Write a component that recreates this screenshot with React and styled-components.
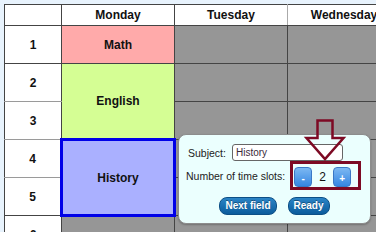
import React from "react";
import styled, { createGlobalStyle } from "styled-components";

const Global = createGlobalStyle`
  html, body { margin: 0; padding: 0; background: #e8f3fd; overflow: hidden; }
  body { font-family: "Liberation Sans", Arial, sans-serif; color: #111; }
`;

const Page = styled.div`
  position: relative;
  width: 376px;
  height: 232px;
  padding: 4px 0 0 4px;
  box-sizing: border-box;
  overflow: hidden;
`;

const Table = styled.table`
  border-collapse: collapse;
  table-layout: fixed;
  width: 396px;
  border: 1px solid #444;
`;

const Cell = styled.td`
  border: 1px solid #444;
  padding: 0;
  text-align: center;
  vertical-align: middle;
  font-weight: bold;
  font-size: 12px;
  height: 37px;
  color: #111;
`;

const HeadCell = styled(Cell).attrs({ as: "th" })`
  height: 20px;
  background: #fff;
  ${(p) => (p.$lightRight ? "border-right-color: #aaa;" : "")}
`;

const NumCell = styled(Cell)`
  background: #fff;
  border-bottom-color: ${(p) => (p.$light ? "#9a9a9a" : "#444")};
`;

const SubjectCell = styled(Cell)`
  background: ${(p) => p.$bg};
  ${(p) => (p.$selected ? "border: 3px solid #0000e8;" : "")}
`;

const GreyCell = styled(Cell)`
  background: #969696;
`;

const Popup = styled.div`
  position: absolute;
  left: 178px;
  top: 134px;
  width: 193px;
  height: 90px;
  box-sizing: border-box;
  background: #ebfffe;
  border: 1px solid #8c8c8c;
  border-radius: 8px;
  box-shadow: 0 1px 2px rgba(0, 0, 0, 0.25);
  padding-top: 9px;
  display: flex;
  flex-direction: column;
  font-size: 10.5px;
  color: #222;
`;

const Row = styled.div`
  display: flex;
  align-items: center;
  padding-left: ${(p) => p.$indent}px;
  gap: ${(p) => p.$gap}px;
`;

const Label = styled.span`
  white-space: nowrap;
`;

const Input = styled.div`
  width: 111px;
  height: 17px;
  box-sizing: border-box;
  border: 1px solid #666;
  border-radius: 3px;
  background: #fff;
  padding-left: 3px;
  font-size: 10px;
  line-height: 15px;
  color: #3a2a3a;
`;

const Highlight = styled.div`
  display: flex;
  align-items: flex-end;
  border: 3px solid #7d0a24;
  padding: 3px 7px 0 1px;
`;

const StepButton = styled.div`
  width: 18px;
  height: 20px;
  box-sizing: border-box;
  border: 1px solid #3a78c6;
  border-radius: 4px;
  background: linear-gradient(#7cb8f2, #3586e2);
  color: #fff;
  font-weight: bold;
  font-size: 10px;
  display: flex;
  align-items: center;
  justify-content: center;
  padding-top: 3px;
`;

const Count = styled.span`
  width: 21px;
  text-align: center;
  font-size: 12px;
  align-self: center;
  color: #111;
`;

const Actions = styled.div`
  display: flex;
  justify-content: center;
  gap: 11px;
  margin-top: 7px;
`;

const ActionButton = styled.div`
  height: 18px;
  box-sizing: border-box;
  padding: 0 5px;
  border: 1px solid #0c4f86;
  border-radius: 8px;
  background: linear-gradient(#2b84c6, #0b5c9c);
  color: #fff;
  font-weight: bold;
  font-size: 10px;
  line-height: 16px;
  text-shadow: 0 -1px 0 rgba(0, 0, 0, 0.35);
  white-space: nowrap;
`;

const Arrow = styled.svg`
  position: absolute;
  left: 304px;
  top: 117px;
  width: 42px;
  height: 45px;
  overflow: visible;
`;

export default function App() {
  return (
    <Page>
      <Global />
      <Table>
        <colgroup>
          <col style={{ width: 57 }} />
          <col style={{ width: 113 }} />
          <col style={{ width: 113 }} />
          <col style={{ width: 113 }} />
        </colgroup>
        <thead>
          <tr>
            <HeadCell />
            <HeadCell>Monday</HeadCell>
            <HeadCell $lightRight>Tuesday</HeadCell>
            <HeadCell>Wednesday</HeadCell>
          </tr>
        </thead>
        <tbody>
          <tr>
            <NumCell>1</NumCell>
            <SubjectCell $bg="#ffaaaa">Math</SubjectCell>
            <GreyCell />
            <GreyCell />
          </tr>
          <tr>
            <NumCell $light>2</NumCell>
            <SubjectCell rowSpan={2} $bg="#d5fe94">English</SubjectCell>
            <GreyCell />
            <GreyCell />
          </tr>
          <tr>
            <NumCell $light>3</NumCell>
            <GreyCell />
            <GreyCell />
          </tr>
          <tr>
            <NumCell $light>4</NumCell>
            <SubjectCell rowSpan={2} $bg="#aab0ff" $selected>History</SubjectCell>
            <GreyCell />
            <GreyCell />
          </tr>
          <tr>
            <NumCell>5</NumCell>
            <GreyCell />
            <GreyCell />
          </tr>
          <tr>
            <NumCell>6</NumCell>
            <GreyCell />
            <GreyCell />
            <GreyCell />
          </tr>
        </tbody>
      </Table>

      <Popup>
        <Row $indent={9} $gap={6}>
          <Label>Subject:</Label>
          <Input>History</Input>
        </Row>
        <Row $indent={7} $gap={5}>
          <Label>Number of time slots:</Label>
          <Highlight>
            <StepButton>-</StepButton>
            <Count>2</Count>
            <StepButton>+</StepButton>
          </Highlight>
        </Row>
        <Actions>
          <ActionButton>Next field</ActionButton>
          <ActionButton>Ready</ActionButton>
        </Actions>
      </Popup>

      <Arrow viewBox="0 0 42 45">
        <path
          d="M13.5 3.5 H28.5 V21 H39.5 L21 42 L2.5 21 H13.5 Z"
          fill="none"
          stroke="#7d0a24"
          strokeWidth="2.5"
          strokeLinejoin="miter"
        />
      </Arrow>
    </Page>
  );
}
